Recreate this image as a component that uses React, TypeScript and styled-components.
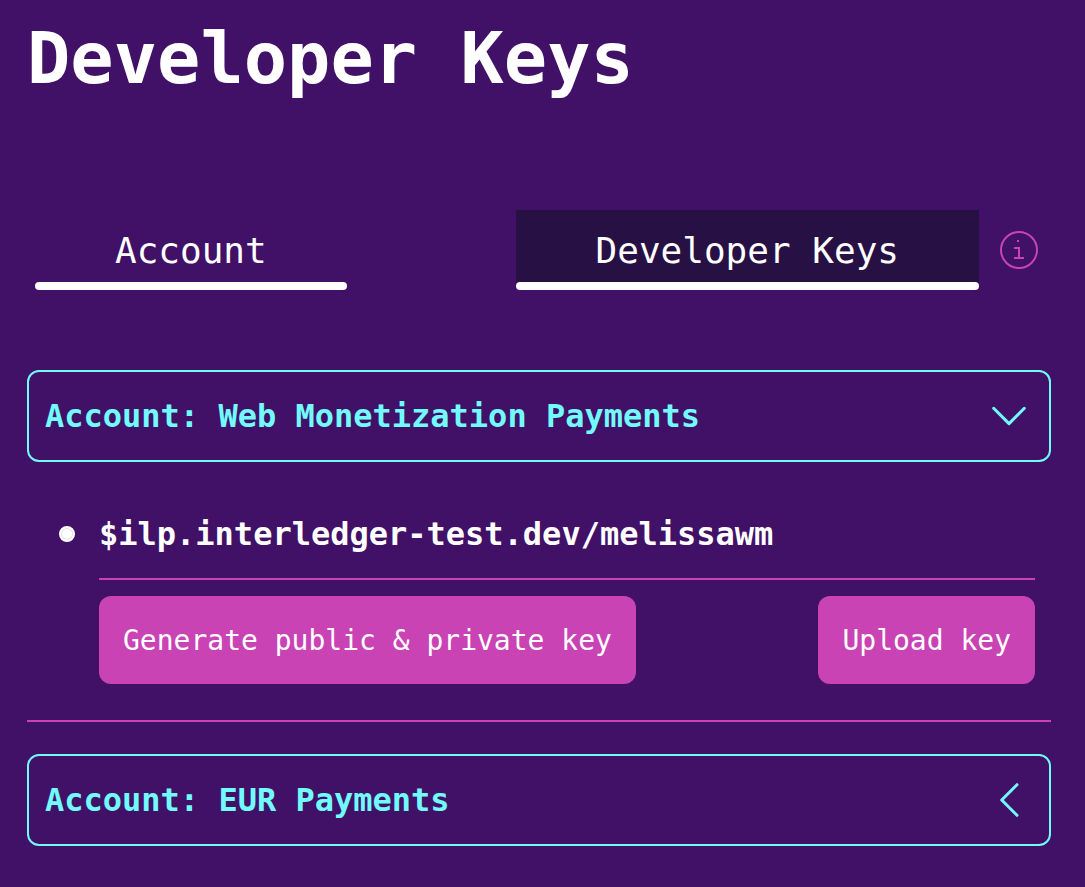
import React from "react";
import styled, { createGlobalStyle } from "styled-components";

const Global = createGlobalStyle`
  *, *::before, *::after { box-sizing: border-box; }
  body { margin: 0; background: #411067; color: #fff; font-family: "DejaVu Sans Mono", monospace; }
`;

const Page = styled.main`padding: 14px 34px 41px 27px;`;
const Title = styled.h1`margin: 0; font-size: 72px; line-height: 88px; font-weight: 700;`;
const Tabs = styled.nav`display: flex; align-items: center; margin: 108px 0 80px; padding: 0 12px 0 8px;`;
const Tab = styled.a<{ $active?: boolean }>`
  position: relative;
  height: 80px; padding: 0 80px;
  font-size: 36px; line-height: 82px;
  color: #fff; text-decoration: none;
  background: ${p => (p.$active ? "linear-gradient(#271044 76px, transparent 76px)" : "none")};
  margin-left: ${p => (p.$active ? "auto" : "0")};
  &::after { content: ""; position: absolute; left: 0; right: 0; bottom: 0; height: 8px; border-radius: 4px; background: #fff; }
`;
const InfoButton = styled.button`
  display: flex; margin-left: 20px; padding: 0; border: 0; background: none; color: #c943b5;
`;
const Account = styled.section`
  & + & { margin-top: 32px; }
`;
const AccountToggle = styled.button`
  display: flex; align-items: center; justify-content: space-between;
  width: 100%; height: 92px; padding: 0 16px;
  border: 2px solid #72fbfd; border-radius: 12px; background: none;
  color: #72fbfd; font: 700 32px "DejaVu Sans Mono", monospace; text-align: left;
`;
const Pointers = styled.ul`
  list-style: none; margin: 0; padding: 48px 16px 36px 32px; border-bottom: 2px solid #c943b5;
`;
const Pointer = styled.li`display: grid; grid-template-columns: 40px 1fr; align-items: center;`;
const Bullet = styled.span`
  width: 16px; height: 16px; border-radius: 50%;
  background: #fff; border: 2px solid #fff; box-shadow: inset 0 0 0 1px #e2dae9;
`;
const Address = styled.span`font-size: 32px; line-height: 48px; font-weight: 700;`;
const Actions = styled.div`
  grid-column: 2; display: flex; justify-content: space-between;
  margin-top: 20px; padding-top: 16px; border-top: 2px solid #c943b5;
`;
const Action = styled.button`
  height: 88px; padding: 0 24px; border: 0; border-radius: 12px;
  background: #c943b5; color: #fff; font: 28px "DejaVu Sans Mono", monospace;
`;

const Chevron = ({ open }: { open?: boolean }) => (
  <svg width="48" height="48" viewBox="0 0 48 48" fill="none" stroke="currentColor" strokeWidth="3" strokeLinecap="round" strokeLinejoin="round" aria-hidden="true">
    <path d={open ? "M8.7 16.3 24 31.6 39.3 16.3" : "M32 8.7 16.7 24 32 39.3"} />
  </svg>
);

export default function App() {
  return (
    <>
      <Global />
      <Page>
        <Title>Developer Keys</Title>
        <Tabs>
          <Tab href="#account">Account</Tab>
          <Tab href="#keys" $active aria-current="page">Developer Keys</Tab>
          <InfoButton type="button" aria-label="Information">
            <svg width="40" height="40" viewBox="0 0 40 40" fill="none" stroke="currentColor" strokeWidth="2">
              <circle cx="20" cy="20" r="18" />
              <path d="M15 18h5v10M15 28h10M18 11h2" />
            </svg>
          </InfoButton>
        </Tabs>
        <Account>
          <AccountToggle type="button" aria-expanded="true">Account: Web Monetization Payments<Chevron open /></AccountToggle>
          <Pointers>
            <Pointer>
              <Bullet />
              <Address>$ilp.interledger-test.dev/melissawm</Address>
              <Actions>
                <Action type="button">Generate public &amp; private key</Action>
                <Action type="button">Upload key</Action>
              </Actions>
            </Pointer>
          </Pointers>
        </Account>
        <Account>
          <AccountToggle type="button" aria-expanded="false">Account: EUR Payments<Chevron /></AccountToggle>
        </Account>
      </Page>
    </>
  );
}
